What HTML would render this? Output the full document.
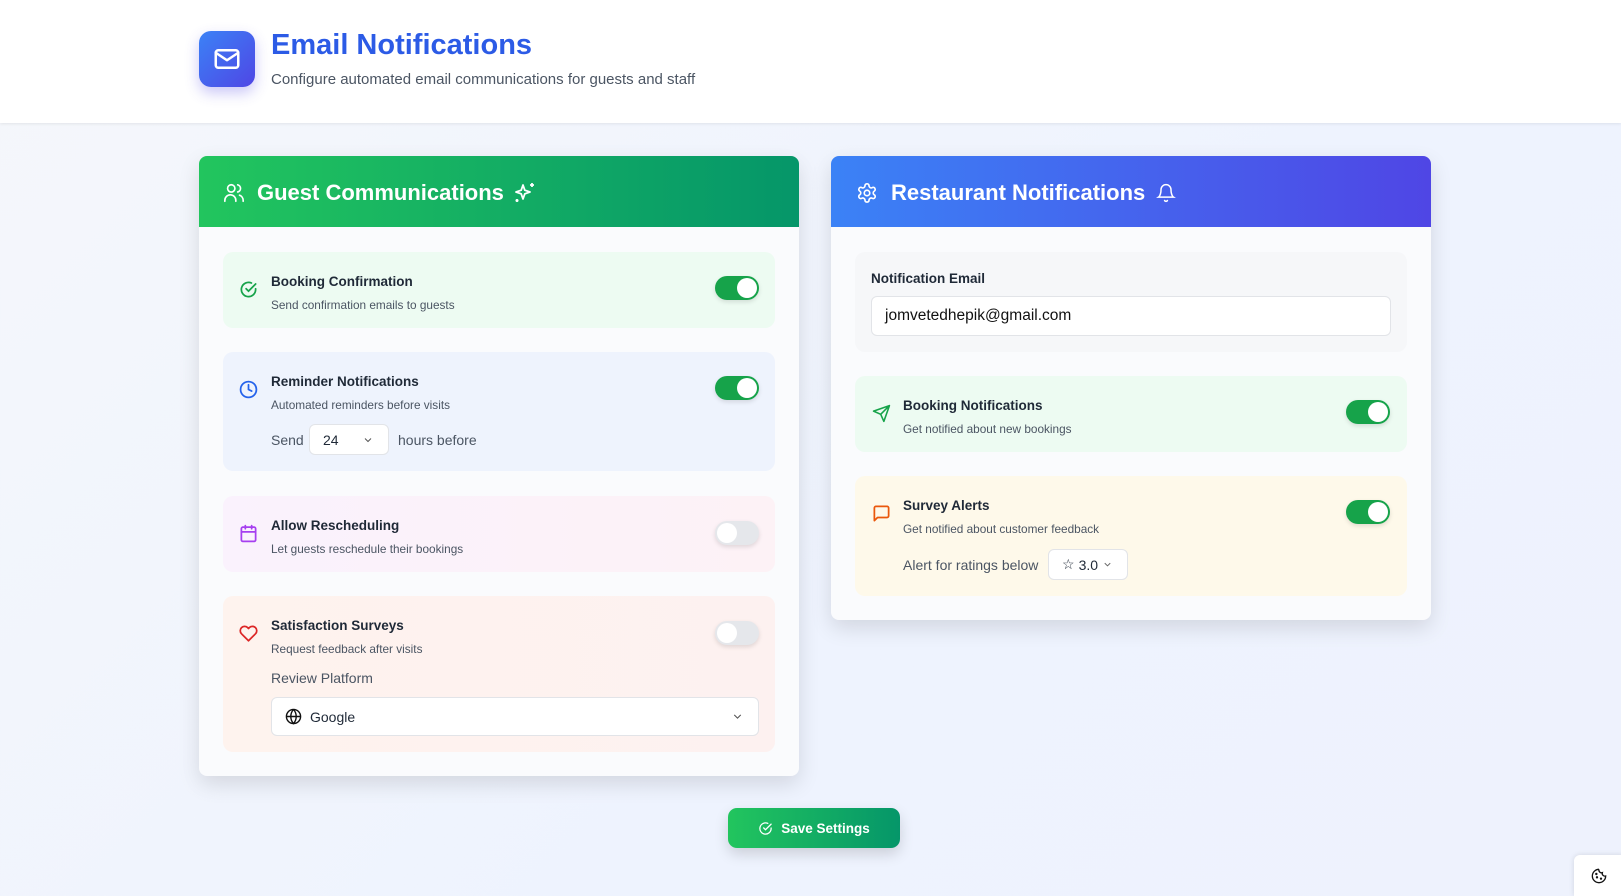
<!DOCTYPE html>
<html><head><meta charset="utf-8"><style>
*{box-sizing:border-box;margin:0;padding:0}
body{width:1621px;height:896px;overflow:hidden;font-family:"Liberation Sans",sans-serif;background:linear-gradient(135deg,#f5f7fb,#eef3fe 60%,#eef2fd);position:relative;color:#1f2937}
.a{position:absolute}
.top{left:0;top:0;width:1621px;height:123px;background:#fff;box-shadow:0 1px 3px rgba(0,0,0,.08)}
.logo{left:199px;top:31px;width:56px;height:56px;border-radius:12px;background:linear-gradient(135deg,#3b82f6,#4f46e5);box-shadow:0 6px 14px rgba(79,70,229,.3);display:flex;align-items:center;justify-content:center}
.h1{left:271px;top:29px;font-size:29px;font-weight:bold;color:#2c5be6;white-space:nowrap}
.sub{left:271px;top:71px;font-size:15px;color:#4b5563;white-space:nowrap}
.card{background:#fafbfd;border-radius:8px;box-shadow:0 8px 22px rgba(0,0,0,.12);overflow:hidden}
.ch{height:71px;display:flex;align-items:center;color:#fff;font-size:22px;font-weight:bold;padding-top:3px}
.item{border-radius:10px}
.t{font-size:13.5px;font-weight:bold;color:#1f2937;white-space:nowrap}
.d{font-size:11.8px;color:#4b5563;white-space:nowrap}
.tg{width:44px;height:24px;border-radius:12px;background:#16a34a;box-shadow:0 2px 5px rgba(0,0,0,.12)}
.tg::after{content:"";position:absolute;top:2px;right:2px;width:20px;height:20px;border-radius:50%;background:#fff}
.tg.off{background:#e5e7eb}
.tg.off::after{right:auto;left:2px}
.sel{background:#fff;border:1px solid #e2e4e8;border-radius:6px;font-size:14px;display:flex;align-items:center}
.lbl{font-size:14px;color:#4b5563;white-space:nowrap}
</style></head><body>
<div class="a top"></div>
<div class="a logo"><svg width="30" height="30" viewBox="0 0 24 24" fill="none" stroke="#fff" stroke-width="2" stroke-linecap="round" stroke-linejoin="round"><rect x="3" y="5" width="18" height="14" rx="2"/><path d="M3 7l9 6 9-6"/></svg></div>
<div class="a h1">Email Notifications</div>
<div class="a sub">Configure automated email communications for guests and staff</div>

<div class="a card" style="left:199px;top:156px;width:600px;height:620px">
 <div class="ch" style="background:linear-gradient(90deg,#22c55e,#059669)">
  <svg style="margin-left:24px;margin-right:12px" width="22" height="22" viewBox="0 0 24 24" fill="none" stroke="#fff" stroke-width="1.8" stroke-linecap="round"><circle cx="9" cy="7" r="4"/><path d="M2 21v-1a6 6 0 0 1 12 0v1M16 3.1a4 4 0 0 1 0 7.8M22 21v-1a6 6 0 0 0-4-5.6"/></svg>
  <span>Guest Communications</span>
  <svg style="margin-left:9px" width="24" height="24" viewBox="0 0 24 24" fill="none" stroke="#fff" stroke-width="1.8" stroke-linejoin="round"><path d="M10 4l1.8 5.2L17 11l-5.2 1.8L10 18l-1.8-5.2L3 11l5.2-1.8z"/><path d="M19 2v4M17 4h4M4 18v3M2.5 19.5h3"/></svg>
 </div>
</div>
<div class="a item" style="left:223px;top:252px;width:552px;height:76px;background:#edfbf2"></div>
<svg class="a" style="left:239px;top:280px" width="19" height="19" viewBox="0 0 24 24" fill="none" stroke="#16a34a" stroke-width="2.2" stroke-linecap="round"><path d="M21 11.1V12a9 9 0 1 1-5.3-8.2"/><path d="M9 11l3 3 9-9"/></svg>
<div class="a t" style="left:271px;top:274px">Booking Confirmation</div>
<div class="a d" style="left:271px;top:298px">Send confirmation emails to guests</div>
<div class="a tg" style="left:715px;top:276px"></div>

<div class="a item" style="left:223px;top:352px;width:552px;height:119px;background:#eef3fd"></div>
<svg class="a" style="left:239px;top:380px" width="19" height="19" viewBox="0 0 24 24" fill="none" stroke="#2563eb" stroke-width="2.2" stroke-linecap="round"><circle cx="12" cy="12" r="10"/><path d="M12 6v6l4 2"/></svg>
<div class="a t" style="left:271px;top:374px">Reminder Notifications</div>
<div class="a d" style="left:271px;top:398px">Automated reminders before visits</div>
<div class="a tg" style="left:715px;top:376px"></div>
<div class="a lbl" style="left:271px;top:432px">Send</div>
<div class="a sel" style="left:309px;top:424px;width:80px;height:31px;padding-left:13px">24<svg style="position:absolute;right:14px" width="12" height="12" viewBox="0 0 24 24" fill="none" stroke="#555" stroke-width="2"><path d="M6 9l6 6 6-6"/></svg></div>
<div class="a lbl" style="left:398px;top:432px">hours before</div>

<div class="a item" style="left:223px;top:496px;width:552px;height:76px;background:linear-gradient(90deg,#faf2fd,#fdf2f6)"></div>
<svg class="a" style="left:239px;top:524px" width="19" height="19" viewBox="0 0 24 24" fill="none" stroke="#a63ff0" stroke-width="2.2" stroke-linecap="round"><rect x="3" y="4" width="18" height="18" rx="2"/><path d="M16 2v4M8 2v4M3 10h18"/></svg>
<div class="a t" style="left:271px;top:518px">Allow Rescheduling</div>
<div class="a d" style="left:271px;top:542px">Let guests reschedule their bookings</div>
<div class="a tg off" style="left:715px;top:521px"></div>

<div class="a item" style="left:223px;top:596px;width:552px;height:156px;background:linear-gradient(90deg,#fef3ee,#fdf1f0)"></div>
<svg class="a" style="left:239px;top:624px" width="19" height="19" viewBox="0 0 24 24" fill="none" stroke="#dc2626" stroke-width="2.2" stroke-linejoin="round"><path d="M20.8 4.6a5.5 5.5 0 0 0-7.8 0L12 5.7l-1-1.1a5.5 5.5 0 0 0-7.8 7.8L12 21.2l8.8-8.8a5.5 5.5 0 0 0 0-7.8z"/></svg>
<div class="a t" style="left:271px;top:618px">Satisfaction Surveys</div>
<div class="a d" style="left:271px;top:642px">Request feedback after visits</div>
<div class="a tg off" style="left:715px;top:621px"></div>
<div class="a lbl" style="left:271px;top:670px">Review Platform</div>
<div class="a sel" style="left:271px;top:697px;width:488px;height:39px;padding-left:13px"><svg width="17" height="17" viewBox="0 0 24 24" fill="none" stroke="#111" stroke-width="2"><circle cx="12" cy="12" r="10"/><path d="M2 12h20M12 2a15 15 0 0 1 0 20a15 15 0 0 1 0-20"/></svg><span style="margin-left:8px">Google</span><svg style="position:absolute;right:14px" width="13" height="13" viewBox="0 0 24 24" fill="none" stroke="#555" stroke-width="2"><path d="M6 9l6 6 6-6"/></svg></div>

<div class="a card" style="left:831px;top:156px;width:600px;height:464px">
 <div class="ch" style="background:linear-gradient(90deg,#3b82f6,#4f46e5)">
  <svg style="margin-left:25px;margin-right:13px" width="22" height="22" viewBox="0 0 24 24" fill="none" stroke="#fff" stroke-width="1.8"><path d="M12.2 2h-.4a2 2 0 0 0-2 2v.2a2 2 0 0 1-1 1.7l-.4.3a2 2 0 0 1-2 0l-.2-.1a2 2 0 0 0-2.7.7l-.2.4a2 2 0 0 0 .7 2.7l.2.1a2 2 0 0 1 1 1.7v.5a2 2 0 0 1-1 1.7l-.2.1a2 2 0 0 0-.7 2.7l.2.4a2 2 0 0 0 2.7.7l.2-.1a2 2 0 0 1 2 0l.4.3a2 2 0 0 1 1 1.7v.2a2 2 0 0 0 2 2h.4a2 2 0 0 0 2-2v-.2a2 2 0 0 1 1-1.7l.4-.3a2 2 0 0 1 2 0l.2.1a2 2 0 0 0 2.7-.7l.2-.4a2 2 0 0 0-.7-2.7l-.2-.1a2 2 0 0 1-1-1.7v-.5a2 2 0 0 1 1-1.7l.2-.1a2 2 0 0 0 .7-2.7l-.2-.4a2 2 0 0 0-2.7-.7l-.2.1a2 2 0 0 1-2 0l-.4-.3a2 2 0 0 1-1-1.7V4a2 2 0 0 0-2-2z"/><circle cx="12" cy="12" r="3"/></svg>
  <span>Restaurant Notifications</span>
  <svg style="margin-left:11px" width="20" height="20" viewBox="0 0 24 24" fill="none" stroke="#fff" stroke-width="1.8" stroke-linecap="round"><path d="M6 8a6 6 0 0 1 12 0c0 7 3 9 3 9H3s3-2 3-9M10.3 21a1.9 1.9 0 0 0 3.4 0"/></svg>
 </div>
</div>
<div class="a item" style="left:855px;top:252px;width:552px;height:100px;background:#f6f7f9"></div>
<div class="a t" style="left:871px;top:271px">Notification Email</div>
<div class="a sel" style="left:871px;top:296px;width:520px;height:40px;padding-left:13px;font-size:15.5px;color:#111">jomvetedhepik@gmail.com</div>

<div class="a item" style="left:855px;top:376px;width:552px;height:76px;background:#edfbf2"></div>
<svg class="a" style="left:872px;top:404px" width="19" height="19" viewBox="0 0 24 24" fill="none" stroke="#16a34a" stroke-width="2" stroke-linejoin="round"><path d="M22 2L11 13M22 2l-7 20-4-9-9-4z"/></svg>
<div class="a t" style="left:903px;top:398px">Booking Notifications</div>
<div class="a d" style="left:903px;top:422px">Get notified about new bookings</div>
<div class="a tg" style="left:1346px;top:400px"></div>

<div class="a item" style="left:855px;top:476px;width:552px;height:120px;background:#fef9ea"></div>
<svg class="a" style="left:872px;top:504px" width="19" height="19" viewBox="0 0 24 24" fill="none" stroke="#ea580c" stroke-width="2.2" stroke-linejoin="round"><path d="M21 15a2 2 0 0 1-2 2H7l-4 4V5a2 2 0 0 1 2-2h14a2 2 0 0 1 2 2z"/></svg>
<div class="a t" style="left:903px;top:498px">Survey Alerts</div>
<div class="a d" style="left:903px;top:522px">Get notified about customer feedback</div>
<div class="a tg" style="left:1346px;top:500px"></div>
<div class="a lbl" style="left:903px;top:557px">Alert for ratings below</div>
<div class="a sel" style="left:1048px;top:549px;width:80px;height:31px;padding-left:13px"><span style="font-size:14px">☆</span><span style="margin-left:4px">3.0</span><svg style="position:absolute;right:14px" width="11" height="11" viewBox="0 0 24 24" fill="none" stroke="#666" stroke-width="2"><path d="M6 9l6 6 6-6"/></svg></div>

<div class="a" style="left:728px;top:808px;width:172px;height:40px;border-radius:9px;background:linear-gradient(90deg,#22c55e,#059669);box-shadow:0 6px 14px rgba(0,0,0,.15);display:flex;align-items:center;justify-content:center;color:#fff;font-size:13.5px;font-weight:bold"><svg width="15" height="15" viewBox="0 0 24 24" fill="none" stroke="#fff" stroke-width="2" stroke-linecap="round"><path d="M21 11.1V12a9 9 0 1 1-5.3-8.2"/><path d="M9 11l3 3 9-9"/></svg><span style="margin-left:8px">Save Settings</span></div>
<div class="a" style="left:1574px;top:855px;width:50px;height:41px;background:#fff;border-radius:6px 0 0 0;box-shadow:0 0 6px rgba(0,0,0,.12);display:flex;align-items:center;justify-content:center"><svg width="16" height="16" viewBox="0 0 24 24" fill="none" stroke="#111" stroke-width="2"><path d="M12 2a10 10 0 1 0 10 10 4 4 0 0 1-5-5 4 4 0 0 1-5-5"/><circle cx="9" cy="14" r=".8"/><circle cx="15" cy="16" r=".8"/><circle cx="8" cy="9" r=".8"/></svg></div>
</body></html>
